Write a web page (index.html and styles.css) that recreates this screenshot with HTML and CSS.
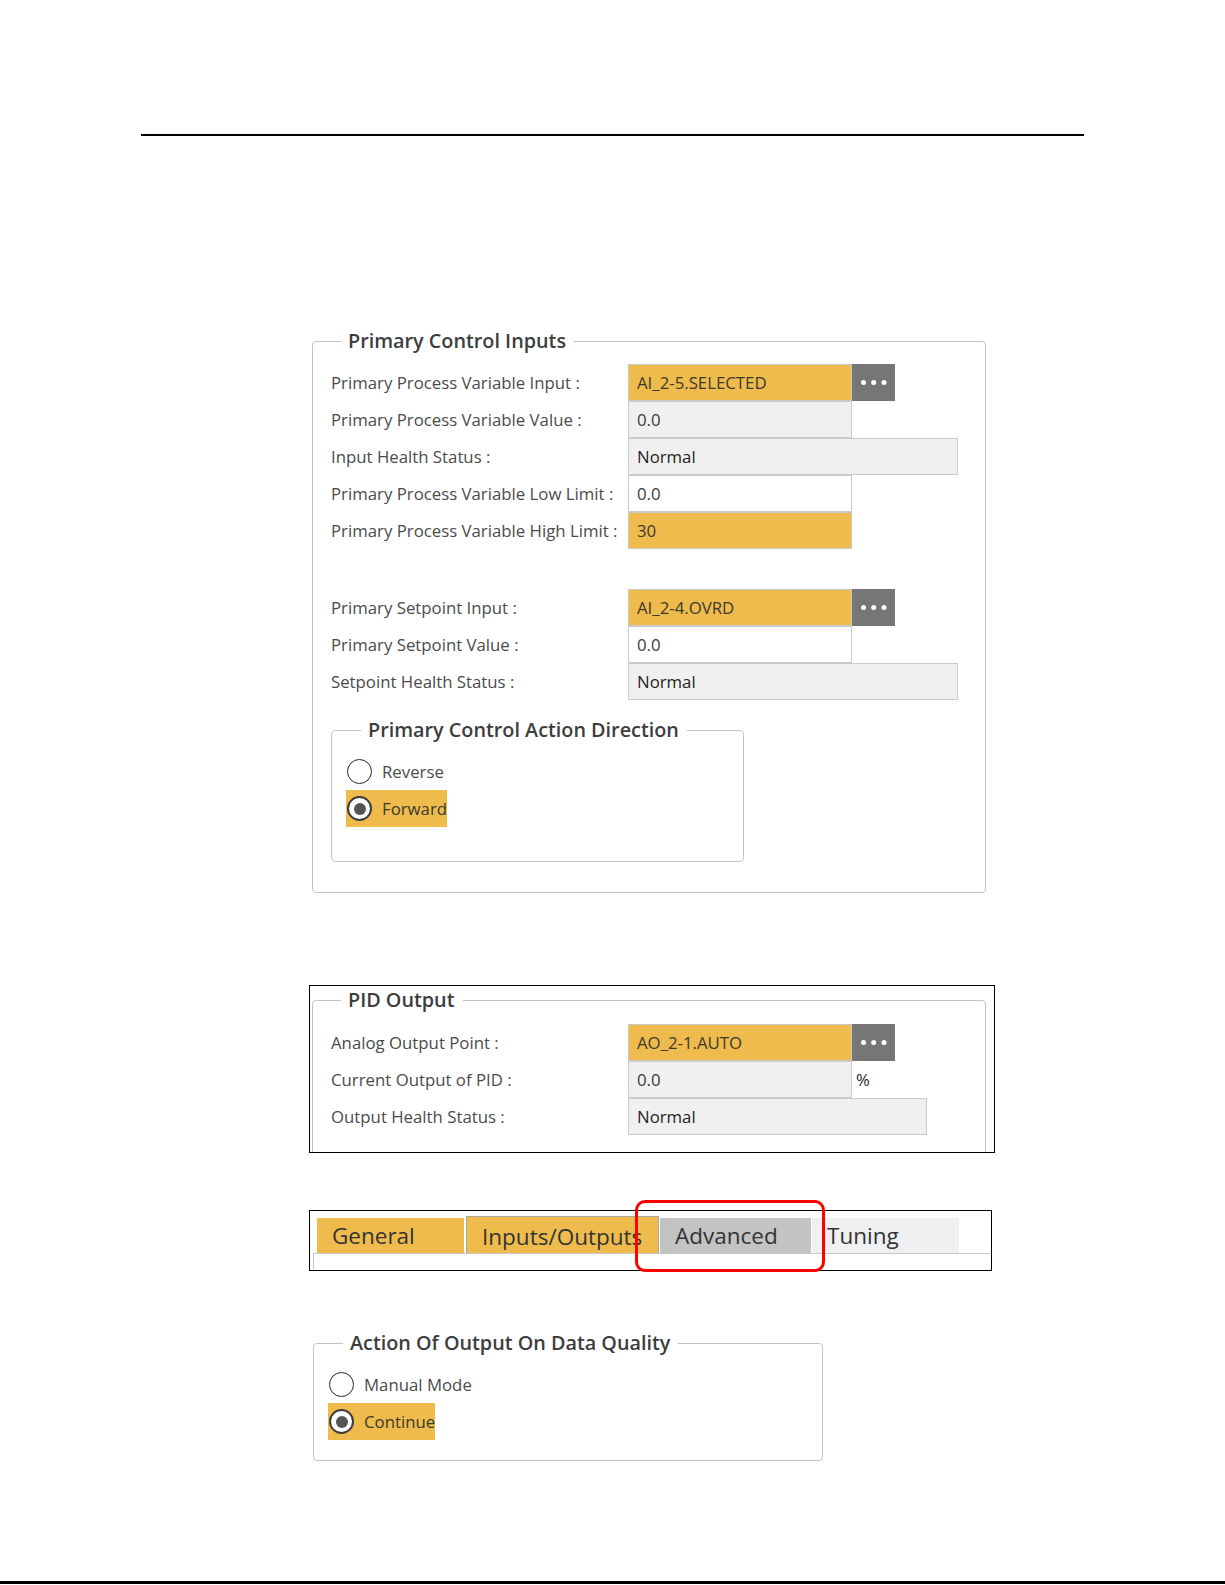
FILE: index.html
```html
<!DOCTYPE html>
<html lang="en">
<head>
<meta charset="utf-8">
<title>PID Configuration</title>
<link rel="stylesheet" href="styles.css">
</head>
<body>
<div class="page">
  <div class="rule-top"></div>

  <fieldset class="group group-inputs">
    <legend>Primary Control Inputs</legend>
    <div class="form">
      <div class="row">
        <span class="label">Primary Process Variable Input :</span>
        <span class="field short yellow">AI_2-5.SELECTED</span>
        <span class="browse"><svg width="43" height="37" viewBox="0 0 43 37"><circle cx="11.5" cy="18.5" r="2.5"/><circle cx="21.7" cy="18.5" r="2.5"/><circle cx="32" cy="18.5" r="2.5"/></svg></span>
      </div>
      <div class="row">
        <span class="label">Primary Process Variable Value :</span>
        <span class="field short ro">0.0</span>
      </div>
      <div class="row">
        <span class="label">Input Health Status :</span>
        <span class="field long ro dark">Normal</span>
      </div>
      <div class="row">
        <span class="label">Primary Process Variable Low Limit :</span>
        <span class="field short">0.0</span>
      </div>
      <div class="row">
        <span class="label">Primary Process Variable High Limit :</span>
        <span class="field short yellow">30</span>
      </div>
      <div class="row row-gap">
        <span class="label">Primary Setpoint Input :</span>
        <span class="field short yellow">AI_2-4.OVRD</span>
        <span class="browse"><svg width="43" height="37" viewBox="0 0 43 37"><circle cx="11.5" cy="18.5" r="2.5"/><circle cx="21.7" cy="18.5" r="2.5"/><circle cx="32" cy="18.5" r="2.5"/></svg></span>
      </div>
      <div class="row">
        <span class="label">Primary Setpoint Value :</span>
        <span class="field short">0.0</span>
      </div>
      <div class="row">
        <span class="label">Setpoint Health Status :</span>
        <span class="field long ro dark">Normal</span>
      </div>
    </div>

    <fieldset class="group group-sub">
      <legend>Primary Control Action Direction</legend>
      <div class="radios">
        <span class="radio"><span class="dot"></span>Reverse</span>
        <span class="radio checked"><span class="dot"></span>Forward</span>
      </div>
    </fieldset>
  </fieldset>

  <div class="frame frame-pid">
    <fieldset class="group group-pid">
      <legend>PID Output</legend>
      <div class="form">
        <div class="row">
          <span class="label">Analog Output Point :</span>
          <span class="field short yellow">AO_2-1.AUTO</span>
          <span class="browse"><svg width="43" height="37" viewBox="0 0 43 37"><circle cx="11.5" cy="18.5" r="2.5"/><circle cx="21.7" cy="18.5" r="2.5"/><circle cx="32" cy="18.5" r="2.5"/></svg></span>
        </div>
        <div class="row">
          <span class="label">Current Output of PID :</span>
          <span class="field short ro">0.0</span>
          <span class="unit">%</span>
        </div>
        <div class="row">
          <span class="label">Output Health Status :</span>
          <span class="field mid ro dark">Normal</span>
        </div>
      </div>
    </fieldset>
  </div>

  <div class="frame frame-tabs">
    <div class="tab-control">
      <div class="tab-strip">
        <span class="tab tab-general">General</span>
        <span class="tab tab-io">Inputs/Outputs</span>
        <span class="tab tab-adv">Advanced</span>
        <span class="tab tab-tuning">Tuning</span>
      </div>
      <div class="tab-body"></div>
    </div>
    <div class="callout"></div>
  </div>

  <fieldset class="group group-quality">
    <legend>Action Of Output On Data Quality</legend>
    <div class="radios">
      <span class="radio"><span class="dot"></span>Manual Mode</span>
      <span class="radio checked"><span class="dot"></span>Continue</span>
    </div>
  </fieldset>

  <div class="rule-bottom"></div>
</div>
</body>
</html>
```

FILE: styles.css
```css
html, body {
  margin: 0;
  padding: 0;
  background: #ffffff;
  overflow: hidden;
}

.page {
  width: 1225px;
  height: 1584px;
  overflow: hidden;
  font-family: "Open Sans", "Noto Sans", "DejaVu Sans", sans-serif;
  font-size: 16.8px;
  color: #4b4b4b;
}

.rule-top {
  margin: 134px 0 0 141px;
  width: 943px;
  height: 2px;
  background: #000;
}

.rule-bottom {
  margin-top: 120px;
  width: 1225px;
  height: 3px;
  background: #000;
}

/* group boxes */
.group {
  box-sizing: border-box;
  min-width: 0;
  margin: 0;
  border: 1px solid #c3c3c3;
  border-radius: 4px;
}

.group > legend {
  font-size: 19.8px;
  line-height: 24px;
  font-weight: 600;
  color: #3d3d3d;
  padding: 0 8px 0 7px;
  white-space: nowrap;
}

.group-inputs {
  margin: 193px 0 0 312px;
  width: 674px;
  padding: 11px 18px 30px 18px;
}
.group-inputs > legend { margin-left: 10px; }

.group-sub {
  margin-top: 18px;
  width: 413px;
  padding: 11px 14px 34px 14px;
}
.group-sub > legend { margin-left: 15px; }

.group-pid {
  width: 674px;
  padding: 12px 18px 40px 18px;
}
.group-pid > legend { margin-left: 10px; }

.group-quality {
  margin: 60px 0 0 313px;
  width: 510px;
  padding: 11px 14px 20px 14px;
}
.group-quality > legend { margin-left: 15px; }

/* form rows */
.form {
  display: flex;
  flex-direction: column;
}

.row {
  display: flex;
  align-items: center;
  height: 37px;
}

.row-gap { margin-top: 40px; }

.label {
  width: 297px;
  flex: none;
  white-space: nowrap;
}

.field {
  box-sizing: border-box;
  height: 37px;
  display: flex;
  align-items: center;
  padding-left: 8px;
  border: 1px solid #cacaca;
  background: #ffffff;
  color: #3a3a3a;
  white-space: nowrap;
}
.field.short { width: 224px; }
.field.long { width: 330px; }
.field.mid { width: 299px; }
.field.ro { background: #f0f0f0; }
.field.dark { color: #1f1f1f; }
.field.yellow { background: #efbb4c; color: #3a3a2e; }

.browse {
  width: 43px;
  height: 37px;
  background: #767676;
  display: flex;
}
.browse svg { fill: #ffffff; }

.unit {
  margin-left: 4px;
  color: #2a2a2a;
}

/* radios */
.radios {
  display: flex;
  flex-direction: column;
  align-items: flex-start;
}

.radio {
  display: inline-flex;
  align-items: center;
  gap: 10px;
  height: 37px;
  padding-left: 1px;
  white-space: nowrap;
}

.radio.checked {
  background: #efbb4c;
  color: #3a3a2e;
}

.dot {
  box-sizing: border-box;
  width: 25px;
  height: 25px;
  border-radius: 50%;
  border: 1.5px solid #262626;
  background: #ffffff;
  display: flex;
  align-items: center;
  justify-content: center;
}

.radio.checked .dot {
  border: 2px solid #3c3c3c;
}

.radio.checked .dot::after {
  content: "";
  width: 12px;
  height: 12px;
  border-radius: 50%;
  background: #555555;
}

/* frames */
.frame {
  box-sizing: border-box;
  border: 1px solid #000;
}

.frame-pid {
  margin: 92px 0 0 309px;
  width: 686px;
  height: 168px;
  padding: 2px 0 0 2px;
  overflow: hidden;
}

.frame-tabs {
  position: relative;
  margin: 57px 0 0 309px;
  width: 683px;
  height: 61px;
  padding: 0 0 0 3px;
}

.tab-control {
  display: flex;
  flex-direction: column;
  height: 100%;
}

.tab-strip {
  display: flex;
  align-items: flex-end;
  height: 42px;
  padding-left: 4px;
}

.tab {
  box-sizing: border-box;
  height: 35px;
  display: flex;
  align-items: center;
  padding-left: 15px;
  font-size: 22.5px;
  color: #333333;
  white-space: nowrap;
}

.tab-general { width: 147px; background: #efbb4c; margin-right: 2px; }
.tab-io {
  width: 193px;
  height: 37px;
  padding-left: 15px;
  padding-top: 2px;
  background: #efbb4c;
  border: 1px solid #a8a8a8;
  border-bottom: none;
  margin-right: 1px;
}
.tab-adv { width: 151px; background: #c3c3c3; margin-right: 1px; }
.tab-tuning { width: 147px; background: #f0f0f0; }

.tab-body {
  flex: 1;
  border-top: 1px solid #c8c8c8;
  border-left: 1px solid #c8c8c8;
}

.callout {
  position: absolute;
  left: 325px;
  top: -11px;
  width: 190px;
  height: 72px;
  box-sizing: border-box;
  border: 3px solid #ff0000;
  border-radius: 10px;
}
```
